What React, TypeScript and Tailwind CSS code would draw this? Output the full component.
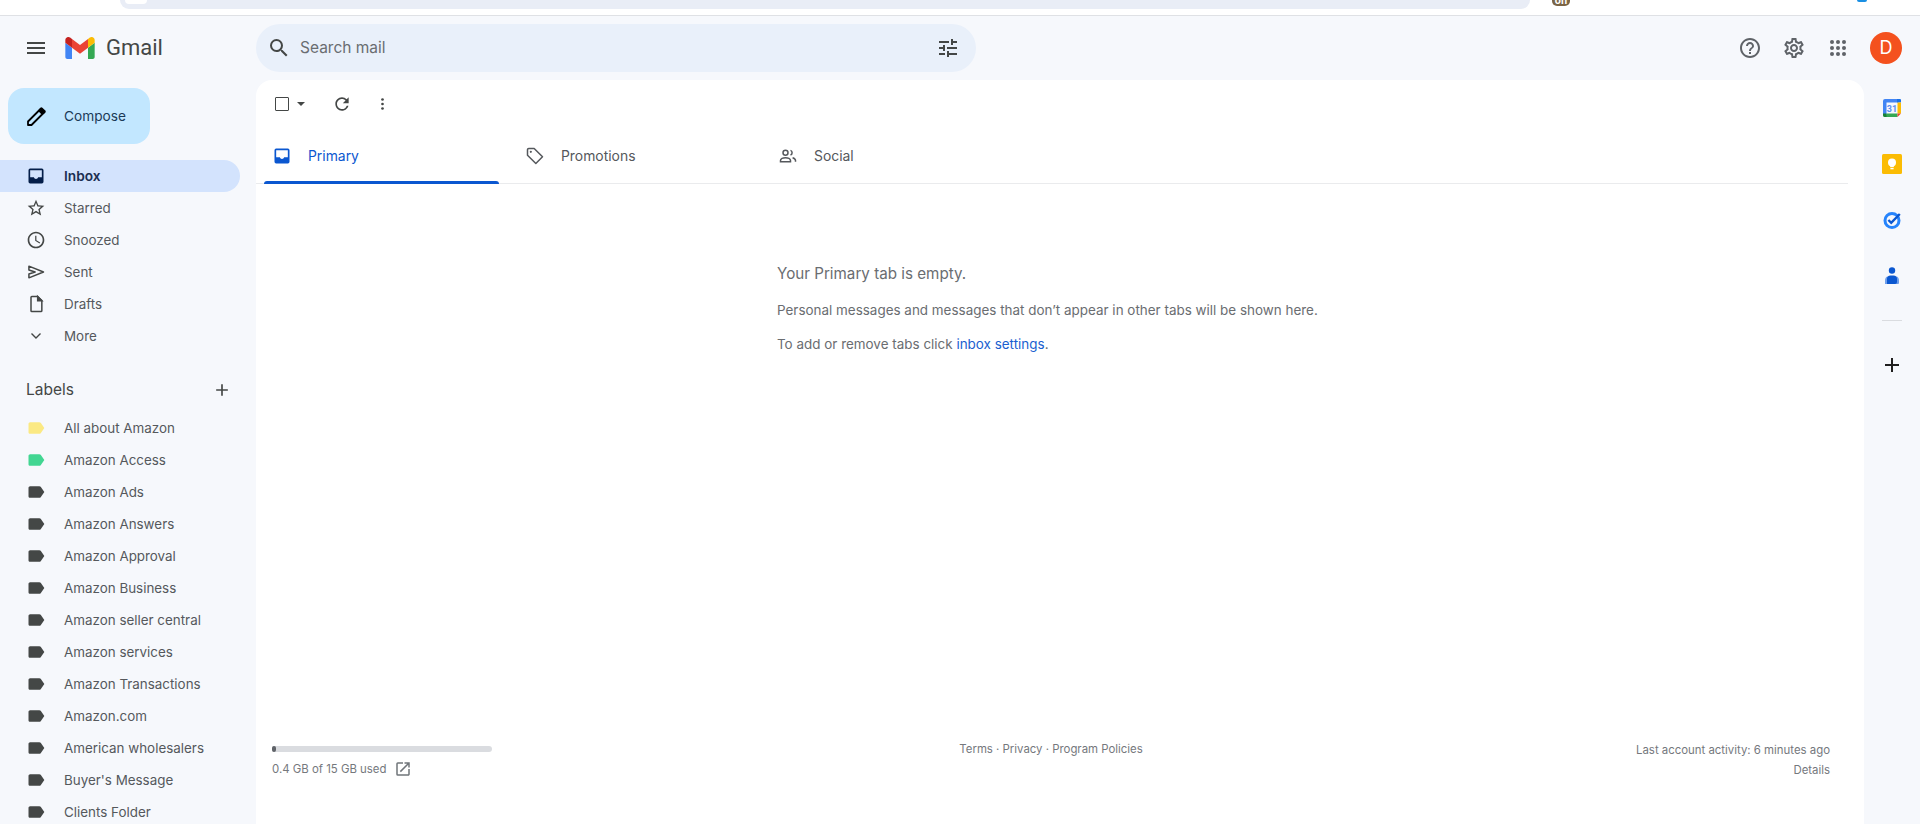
import React from 'react';

const P = {
  menu: 'M3 18h18v-2H3v2zm0-5h18v-2H3v2zm0-7v2h18V6H3z',
  search: 'M15.5 14h-.79l-.28-.27A6.471 6.471 0 0 0 16 9.5 6.5 6.5 0 1 0 9.5 16c1.61 0 3.09-.59 4.23-1.57l.27.28v.79l5 4.99L20.49 19l-4.99-5zm-6 0C7.01 14 5 11.99 5 9.5S7.01 5 9.5 5 14 7.01 14 9.5 11.99 14 9.5 14z',
  tune: 'M3 17v2h6v-2H3zM3 5v2h10V5H3zm10 16v-2h8v-2h-8v-2h-2v6h2zM7 9v2H3v2h4v2h2V9H7zm14 4v-2H11v2h10zm-6-4h2V7h4V5h-4V3h-2v6z',
  help: 'M11 18h2v-2h-2v2zm1-16C6.48 2 2 6.48 2 12s4.48 10 10 10 10-4.48 10-10S17.52 2 12 2zm0 18c-4.41 0-8-3.59-8-8s3.59-8 8-8 8 3.59 8 8-3.59 8-8 8zm0-14c-2.21 0-4 1.79-4 4h2c0-1.1.9-2 2-2s2 .9 2 2c0 2-3 1.75-3 5h2c0-2.25 3-2.5 3-5 0-2.21-1.79-4-4-4z',
  settings: 'M19.43 12.98c.04-.32.07-.64.07-.98 0-.34-.03-.66-.07-.98l2.11-1.65c.19-.15.24-.42.12-.64l-2-3.46c-.09-.16-.26-.25-.44-.25-.06 0-.12.01-.17.03l-2.49 1c-.52-.4-1.08-.73-1.69-.98l-.38-2.65C14.46 2.18 14.25 2 14 2h-4c-.25 0-.46.18-.49.42l-.38 2.65c-.61.25-1.17.59-1.69.98l-2.49-1c-.06-.02-.12-.03-.18-.03-.17 0-.34.09-.43.25l-2 3.46c-.13.22-.07.49.12.64l2.11 1.65c-.04.32-.07.65-.07.98 0 .33.03.66.07.98l-2.11 1.65c-.19.15-.24.42-.12.64l2 3.46c.09.16.26.25.44.25.06 0 .12-.01.17-.03l2.49-1c.52.4 1.08.73 1.69.98l.38 2.65c.03.24.24.42.49.42h4c.25 0 .46-.18.49-.42l.38-2.65c.61-.25 1.17-.59 1.69-.98l2.49 1c.06.02.12.03.18.03.17 0 .34-.09.43-.25l2-3.46c.12-.22.07-.49-.12-.64l-2.11-1.65zm-1.98-1.71c.04.31.05.52.05.73 0 .21-.02.43-.05.73l-.14 1.13.89.7 1.08.84-.7 1.21-1.27-.51-1.04-.42-.9.68c-.43.32-.84.56-1.25.73l-1.06.43-.16 1.13-.2 1.35h-1.4l-.19-1.35-.16-1.13-1.06-.43c-.43-.18-.83-.41-1.23-.71l-.91-.7-1.06.43-1.27.51-.7-1.21 1.08-.84.89-.7-.14-1.13c-.03-.31-.05-.54-.05-.74s.02-.43.05-.73l.14-1.13-.89-.7-1.08-.84.7-1.21 1.27.51 1.04.42.9-.68c.43-.32.84-.56 1.25-.73l1.06-.43.16-1.13.2-1.35h1.39l.19 1.35.16 1.13 1.06.43c.43.18.83.41 1.23.71l.91.7 1.06-.43 1.27-.51.7 1.21-1.07.85-.89.7.14 1.13zM12 8c-2.21 0-4 1.79-4 4s1.79 4 4 4 4-1.79 4-4-1.79-4-4-4zm0 6c-1.1 0-2-.9-2-2s.9-2 2-2 2 .9 2 2-.9 2-2 2z',
  inbox: 'M19 3H5a2 2 0 0 0-2 2v14a2 2 0 0 0 2 2h14a2 2 0 0 0 2-2V5a2 2 0 0 0-2-2zM5 5h14v8.5h-4.5c-.3 1.3-1.3 2-2.5 2s-2.2-.7-2.5-2H5z',
  star: 'M22 9.24l-7.19-.62L12 2 9.19 8.63 2 9.24l5.46 4.73L5.82 21 12 17.27 18.18 21l-1.63-7.03L22 9.24zM12 15.4l-3.76 2.27 1-4.28-3.32-2.88 4.38-.38L12 6.1l1.71 4.04 4.38.38-3.32 2.88 1 4.28L12 15.4z',
  clock: 'M11.99 2C6.47 2 2 6.48 2 12s4.47 10 9.99 10C17.52 22 22 17.52 22 12S17.52 2 11.99 2zM12 20c-4.42 0-8-3.58-8-8s3.58-8 8-8 8 3.58 8 8-3.58 8-8 8zm.5-13H11v6l5.25 3.15.75-1.23-4.5-2.67z',
  plus: 'M19 13h-6v6h-2v-6H5v-2h6V5h2v6h6v2z',
  label: 'M17.63 5.84C17.27 5.33 16.67 5 16 5L5 5.01C3.9 5.01 3 5.9 3 7v10c0 1.1.9 1.99 2 1.99L16 19c.67 0 1.27-.33 1.63-.84L22 12l-4.37-6.16z',
  refresh: 'M17.65 6.35A7.958 7.958 0 0 0 12 4c-4.42 0-7.99 3.58-7.99 8s3.57 8 7.99 8c3.73 0 6.84-2.55 7.73-6h-2.08A5.99 5.99 0 0 1 12 18c-3.31 0-6-2.69-6-6s2.69-6 6-6c1.66 0 3.14.69 4.22 1.78L13 11h7V4l-2.35 2.35z',
  external: 'M19 19H5V5h7V3H5a2 2 0 0 0-2 2v14a2 2 0 0 0 2 2h14c1.1 0 2-.9 2-2v-7h-2v7zM14 3v2h3.59l-9.83 9.83 1.41 1.41L19 6.41V10h2V3h-7z',
};

const Icon = ({ d, size = 20, className = '' }: { d: string; size?: number; className?: string }) => (
  <svg viewBox="0 0 24 24" width={size} height={size} fill="currentColor" className={`shrink-0 ${className}`}>
    <path d={d} />
  </svg>
);

const Outline = ({ children }: { children: React.ReactNode }) => (
  <svg viewBox="0 0 24 24" width={20} height={20} fill="none" stroke="currentColor" strokeWidth="1.8" className="shrink-0">
    {children}
  </svg>
);

const SentIcon = () => (
  <Outline>
    <path d="M3.5 5L21 12 3.5 19v-4.5L11 12 3.5 9.5z" strokeLinejoin="round" />
  </Outline>
);

const DraftIcon = () => (
  <Outline>
    <path d="M7 3h7l5 5v12a1 1 0 0 1-1 1H7a1 1 0 0 1-1-1V4a1 1 0 0 1 1-1z" />
    <path d="M14 3l5 5h-5z" fill="currentColor" />
  </Outline>
);

const TagIcon = () => (
  <Outline>
    <path d="M3 4.5A1.5 1.5 0 0 1 4.5 3H11l10 10-8 8L3 11z" strokeLinejoin="round" />
    <circle cx="7" cy="7" r="1.3" fill="currentColor" stroke="none" />
  </Outline>
);

const PeopleIcon = () => (
  <Outline>
    <circle cx="9" cy="8" r="3" />
    <path d="M3 19v-1.5c0-2 3-3.500 6-3.500s6 1.500 6 3.500V19z" />
    <path d="M15 5.200a3 3 0 0 1 0 5.600" />
    <path d="M17.500 14c2 .6 3.500 1.700 3.500 3.500V19" />
  </Outline>
);

const PencilIcon = () => (
  <svg viewBox="0 0 24 24" width="24" height="24" className="shrink-0">
    <path d="M4 20v-3.500L15 5.500 18.500 9 7.500 20z" fill="none" stroke="#000" strokeWidth="1.8" strokeLinejoin="round" />
    <path d="M14.500 4.500l1.800-1.800a1.500 1.500 0 0 1 2.100 0l2.900 2.900a1.500 1.500 0 0 1 0 2.100l-1.800 1.800z" fill="#000" />
  </svg>
);

const GmailLogo = () => (
  <svg viewBox="52 42 88 66" width="30" height="22" className="shrink-0">
    <path fill="#4285f4" d="M58 108h14V74L52 59v43c0 3.32 2.69 6 6 6" />
    <path fill="#34a853" d="M120 108h14c3.32 0 6-2.69 6-6V59l-20 15" />
    <path fill="#fbbc04" d="M120 48v26l20-15v-8c0-7.42-8.47-11.65-14.4-7.2" />
    <path fill="#ea4335" d="M72 74V48l24 18 24-18v26L96 92" />
    <path fill="#c5221f" d="M52 51v8l20 15V48l-5.6-4.2c-5.94-4.45-14.4-.22-14.4 7.2" />
  </svg>
);

const CalendarIcon = () => (
  <svg viewBox="0 0 20 20" width="20" height="20">
    <path fill="#4285f4" d="M1 3a2 2 0 0 1 2-2h13.5v3.5h-12v12H1z" />
    <path fill="#1a73e8" d="M15 1h3a1 1 0 0 1 1 1v2.5h-4z" />
    <path fill="#fbbc04" d="M15.5 4.5H19v11h-3.5z" />
    <path fill="#34a853" d="M4.5 15.5h11V19H3a2 2 0 0 1-2-2v-.5h3.5z" />
    <path fill="#ea4335" d="M15.5 15.5H19L15.5 19z" />
    <path fill="#188038" d="M1 15.5h3.5V19H3a2 2 0 0 1-2-2z" />
    <text x="10" y="13.5" textAnchor="middle" fontSize="9" fontWeight="700" fill="#5b8ff0" fontFamily="Roboto, sans-serif">31</text>
  </svg>
);

const KeepIcon = () => (
  <svg viewBox="0 0 20 20" width="20" height="20">
    <rect x="0" y="0" width="20" height="20" rx="1.5" fill="#fbbc04" />
    <circle cx="10" cy="8.6" r="4" fill="#fff" />
    <rect x="8.2" y="11" width="3.6" height="2.2" fill="#fff" />
    <rect x="8.4" y="14" width="3.2" height="1.3" fill="#fff" />
  </svg>
);

const TasksIcon = () => (
  <svg viewBox="0 0 20 20" width="20" height="20" fill="none">
    <circle cx="10" cy="10.5" r="7" stroke="#2684fc" strokeWidth="3" />
    <path d="M6.4 10l2.8 2.8 8.6-8.8" stroke="#0b57d0" strokeWidth="2.4" />
  </svg>
);

const ContactsIcon = () => (
  <svg viewBox="0 0 20 20" width="20" height="20">
    <circle cx="10" cy="4.5" r="3.2" fill="#0b57d0" />
    <path fill="#6d9eeb" d="M3 14.5c0-2 1-4 3-4h8c2 0 3 2 3 4V17a1 1 0 0 1-1 1H3z" />
    <path fill="#0b57d0" d="M5 13c0-2 1.2-3.5 3.5-3.5h3c2.3 0 3.5 1.5 3.5 3.5v3a2 2 0 0 1-2 2H5z" />
  </svg>
);

const navItems = [
  { name: 'Starred', icon: <Icon d={P.star} /> },
  { name: 'Snoozed', icon: <Icon d={P.clock} /> },
  { name: 'Sent', icon: <SentIcon /> },
  { name: 'Drafts', icon: <DraftIcon /> },
];

const labels = [
  { name: 'All about Amazon', color: 'text-[#fbe983]' },
  { name: 'Amazon Access', color: 'text-[#42d692]' },
  { name: 'Amazon Ads', color: 'text-[#444746]' },
  { name: 'Amazon Answers', color: 'text-[#444746]' },
  { name: 'Amazon Approval', color: 'text-[#444746]' },
  { name: 'Amazon Business', color: 'text-[#444746]' },
  { name: 'Amazon seller central', color: 'text-[#444746]' },
  { name: 'Amazon services', color: 'text-[#444746]' },
  { name: 'Amazon Transactions', color: 'text-[#444746]' },
  { name: 'Amazon.com', color: 'text-[#444746]' },
  { name: 'American wholesalers', color: 'text-[#444746]' },
  { name: "Buyer's Message", color: 'text-[#444746]' },
  { name: 'Clients Folder', color: 'text-[#444746]' },
];

const Sidebar = () => (
  <aside className="w-[256px] shrink-0 pt-2 text-[13.4px]">
    <div className="ml-2 flex h-[56px] w-[142px] items-center rounded-2xl bg-[#c2e7ff] pl-[16px] pt-[2px] text-[#1b3a57]">
      <PencilIcon />
      <span className="ml-[16px] text-[13.7px] leading-none">Compose</span>
    </div>
    <div className="mt-4 flex h-[32px] w-[240px] items-center rounded-r-full bg-[#d3e3fd] pl-[26px] font-semibold text-[#1b2f52]">
      <Icon d={P.inbox} className="text-[#041e49]" />
      <span className="ml-[18px] text-[13.7px]">Inbox</span>
    </div>
    {navItems.map((item) => (
      <div key={item.name} className="flex h-[32px] items-center pl-[26px] text-[#55585c]">
        <span className="text-[#444746]">{item.icon}</span>
        <span className="ml-[18px]">{item.name}</span>
      </div>
    ))}
    <div className="flex h-[32px] items-center pl-[26px] text-[#55585c]">
      <svg viewBox="0 0 20 20" width="20" height="20" fill="none" stroke="#444746" strokeWidth="1.4" className="shrink-0">
        <path d="M5.5 7.5L10 12l4.5-4.5" />
      </svg>
      <span className="ml-[18px]">More</span>
    </div>
    <div className="mt-[21px] mb-[5px] flex h-[34px] w-[240px] items-center justify-between pl-[26px] pr-[8px] text-[#444746]">
      <span className="text-[15.5px]">Labels</span>
      <Icon d={P.plus} />
    </div>
    {labels.map((label) => (
      <div key={label.name} className="flex h-[32px] items-center pl-[26px] text-[#55585c]">
        <Icon d={P.label} className={label.color} />
        <span className="ml-[18px] whitespace-nowrap">{label.name}</span>
      </div>
    ))}
  </aside>
);

const Tab = ({ name, icon, active }: { name: string; icon: React.ReactNode; active?: boolean }) => (
  <div className={`w-[253px] pr-[18px] ${active ? 'text-[#0b57d0]' : 'text-[#55585c]'}`}>
    <div className="flex h-[60px] items-center pl-[8px] pt-1">
      {icon}
      <span className="ml-[16px] text-[13.9px]">{name}</span>
    </div>
    {active ? <div className="-mt-[3px] h-[3px] rounded-t-[3px] bg-[#0b57d0]" /> : null}
  </div>
);

const MainCard = () => (
  <main className="flex min-w-0 flex-1 flex-col rounded-t-2xl bg-white">
    <div className="flex h-[44px] items-center pt-1 pl-[19px] text-[#444746]">
      <div className="h-[14px] w-[14px] rounded-[1px] border-[1.5px] border-[#444746]" />
      <div className="ml-[8px] h-0 w-0 border-x-[4px] border-t-[4px] border-x-transparent border-t-[#444746]" />
      <Icon d={P.refresh} className="ml-[27px]" />
      <svg viewBox="0 0 4 16" width="3" height="12" fill="currentColor" className="ml-[29px]">
        <circle cx="2" cy="2" r="1.8" />
        <circle cx="2" cy="8" r="1.8" />
        <circle cx="2" cy="14" r="1.8" />
      </svg>
    </div>
    <div className="mr-[16px] flex h-[60px] border-b border-[#eaebed] pl-[8px]">
      <Tab name="Primary" icon={<Icon d={P.inbox} />} active />
      <Tab name="Promotions" icon={<TagIcon />} />
      <Tab name="Social" icon={<PeopleIcon />} />
    </div>
    <div className="flex-1 pl-[521px] pt-[80px] text-[#6a6d71]">
      <p className="text-[15.2px] leading-[20px]">Your Primary tab is empty.</p>
      <p className="mt-[16px] text-[13.45px] leading-[20px]">Personal messages and messages that don’t appear in other tabs will be shown here.</p>
      <p className="mt-[14px] text-[13.45px] leading-[20px]">
        To add or remove tabs click <span className="text-[#1a5fd0]">inbox settings</span>.
      </p>
    </div>
    <footer className="flex h-[89px] items-start justify-between pl-[16px] pr-[34px] text-[11.4px] text-[#75787d]">
      <div className="w-[220px] pt-[11px]">
        <div className="h-[6px] rounded-full bg-[#dadce0]">
          <div className="h-[6px] w-[4px] rounded-full bg-[#5f6368]" />
        </div>
        <div className="mt-[8px] flex items-center leading-[18px]">
          <span>0.4 GB of 15 GB used</span>
          <Icon d={P.external} size={18} className="ml-[8px] text-[#70757a]" />
        </div>
      </div>
      <div className="mr-[26px] pt-[5px] leading-[18px]">Terms · Privacy · Program Policies</div>
      <div className="pt-[5px] text-right leading-[20px]">
        <div>Last account activity: 6 minutes ago</div>
        <div>Details</div>
      </div>
    </footer>
  </main>
);

const SidePanel = () => (
  <div className="flex w-[56px] shrink-0 flex-col items-center">
    <div className="flex h-[56px] items-center"><CalendarIcon /></div>
    <div className="flex h-[56px] items-center"><KeepIcon /></div>
    <div className="flex h-[56px] items-center"><TasksIcon /></div>
    <div className="flex h-[56px] items-center"><ContactsIcon /></div>
    <div className="mt-[16px] h-px w-[20px] bg-[#dadce0]" />
    <div className="mt-[24px] flex h-[40px] items-center text-[#1f1f1f]">
      <Icon d={P.plus} size={24} />
    </div>
  </div>
);

export default function App() {
  return (
    <div className="flex h-[824px] flex-col overflow-hidden bg-[#f6f8fc] font-['Inter',sans-serif]">
      <div className="flex h-[16px] shrink-0 items-start border-b border-[#dfe1e5] bg-white">
        <div className="ml-[120px] h-[9px] w-[1410px] rounded-b-full bg-[#e9edf6]">
          <div className="ml-[5px] h-[4px] w-[22px] rounded-b-full bg-white" />
        </div>
        <div className="ml-[22px] h-[6px] w-[18px] overflow-hidden rounded-b-[5px] bg-[#7b6445]">
          <div className="-mt-[5px] text-center text-[10px] leading-[10px] font-bold text-white">on</div>
        </div>
        <div className="ml-[287px] h-[2px] w-[10px] rounded-b-full bg-[#1a8fe3]" />
      </div>
      <header className="flex h-[64px] shrink-0 items-center">
        <div className="flex w-[256px] shrink-0 items-center pl-[24px]">
          <Icon d={P.menu} size={24} className="text-[#444746]" />
          <div className="ml-[17px]"><GmailLogo /></div>
          <span className="ml-[11px] font-['Roboto',sans-serif] text-[22px] leading-none text-[#444746]">Gmail</span>
        </div>
        <div className="flex h-[48px] w-[720px] items-center rounded-full bg-[#e9f0fa] pl-[11px] pr-[16px]">
          <Icon d={P.search} size={24} className="text-[#444746]" />
          <span className="ml-[9px] flex-1 text-[15.5px] text-[#6a6d71]">Search mail</span>
          <Icon d={P.tune} size={24} className="text-[#444746]" />
        </div>
        <div className="ml-auto flex items-center pr-[18px] text-[#5f6368]">
          <div className="flex w-[44px] justify-center"><Icon d={P.help} size={24} /></div>
          <div className="flex w-[44px] justify-center"><Icon d={P.settings} size={24} /></div>
          <div className="flex w-[44px] justify-center">
            <svg viewBox="0 0 24 24" width="24" height="24" fill="currentColor">
              <circle cx="6" cy="6" r="2" /><circle cx="12" cy="6" r="2" /><circle cx="18" cy="6" r="2" />
              <circle cx="6" cy="12" r="2" /><circle cx="12" cy="12" r="2" /><circle cx="18" cy="12" r="2" />
              <circle cx="6" cy="18" r="2" /><circle cx="12" cy="18" r="2" /><circle cx="18" cy="18" r="2" />
            </svg>
          </div>
          <div className="ml-[10px] flex h-[32px] w-[32px] items-center justify-center rounded-full bg-[#f4511e] text-lg font-normal text-white">D</div>
        </div>
      </header>
      <div className="flex min-h-0 flex-1">
        <Sidebar />
        <MainCard />
        <SidePanel />
      </div>
    </div>
  );
}
